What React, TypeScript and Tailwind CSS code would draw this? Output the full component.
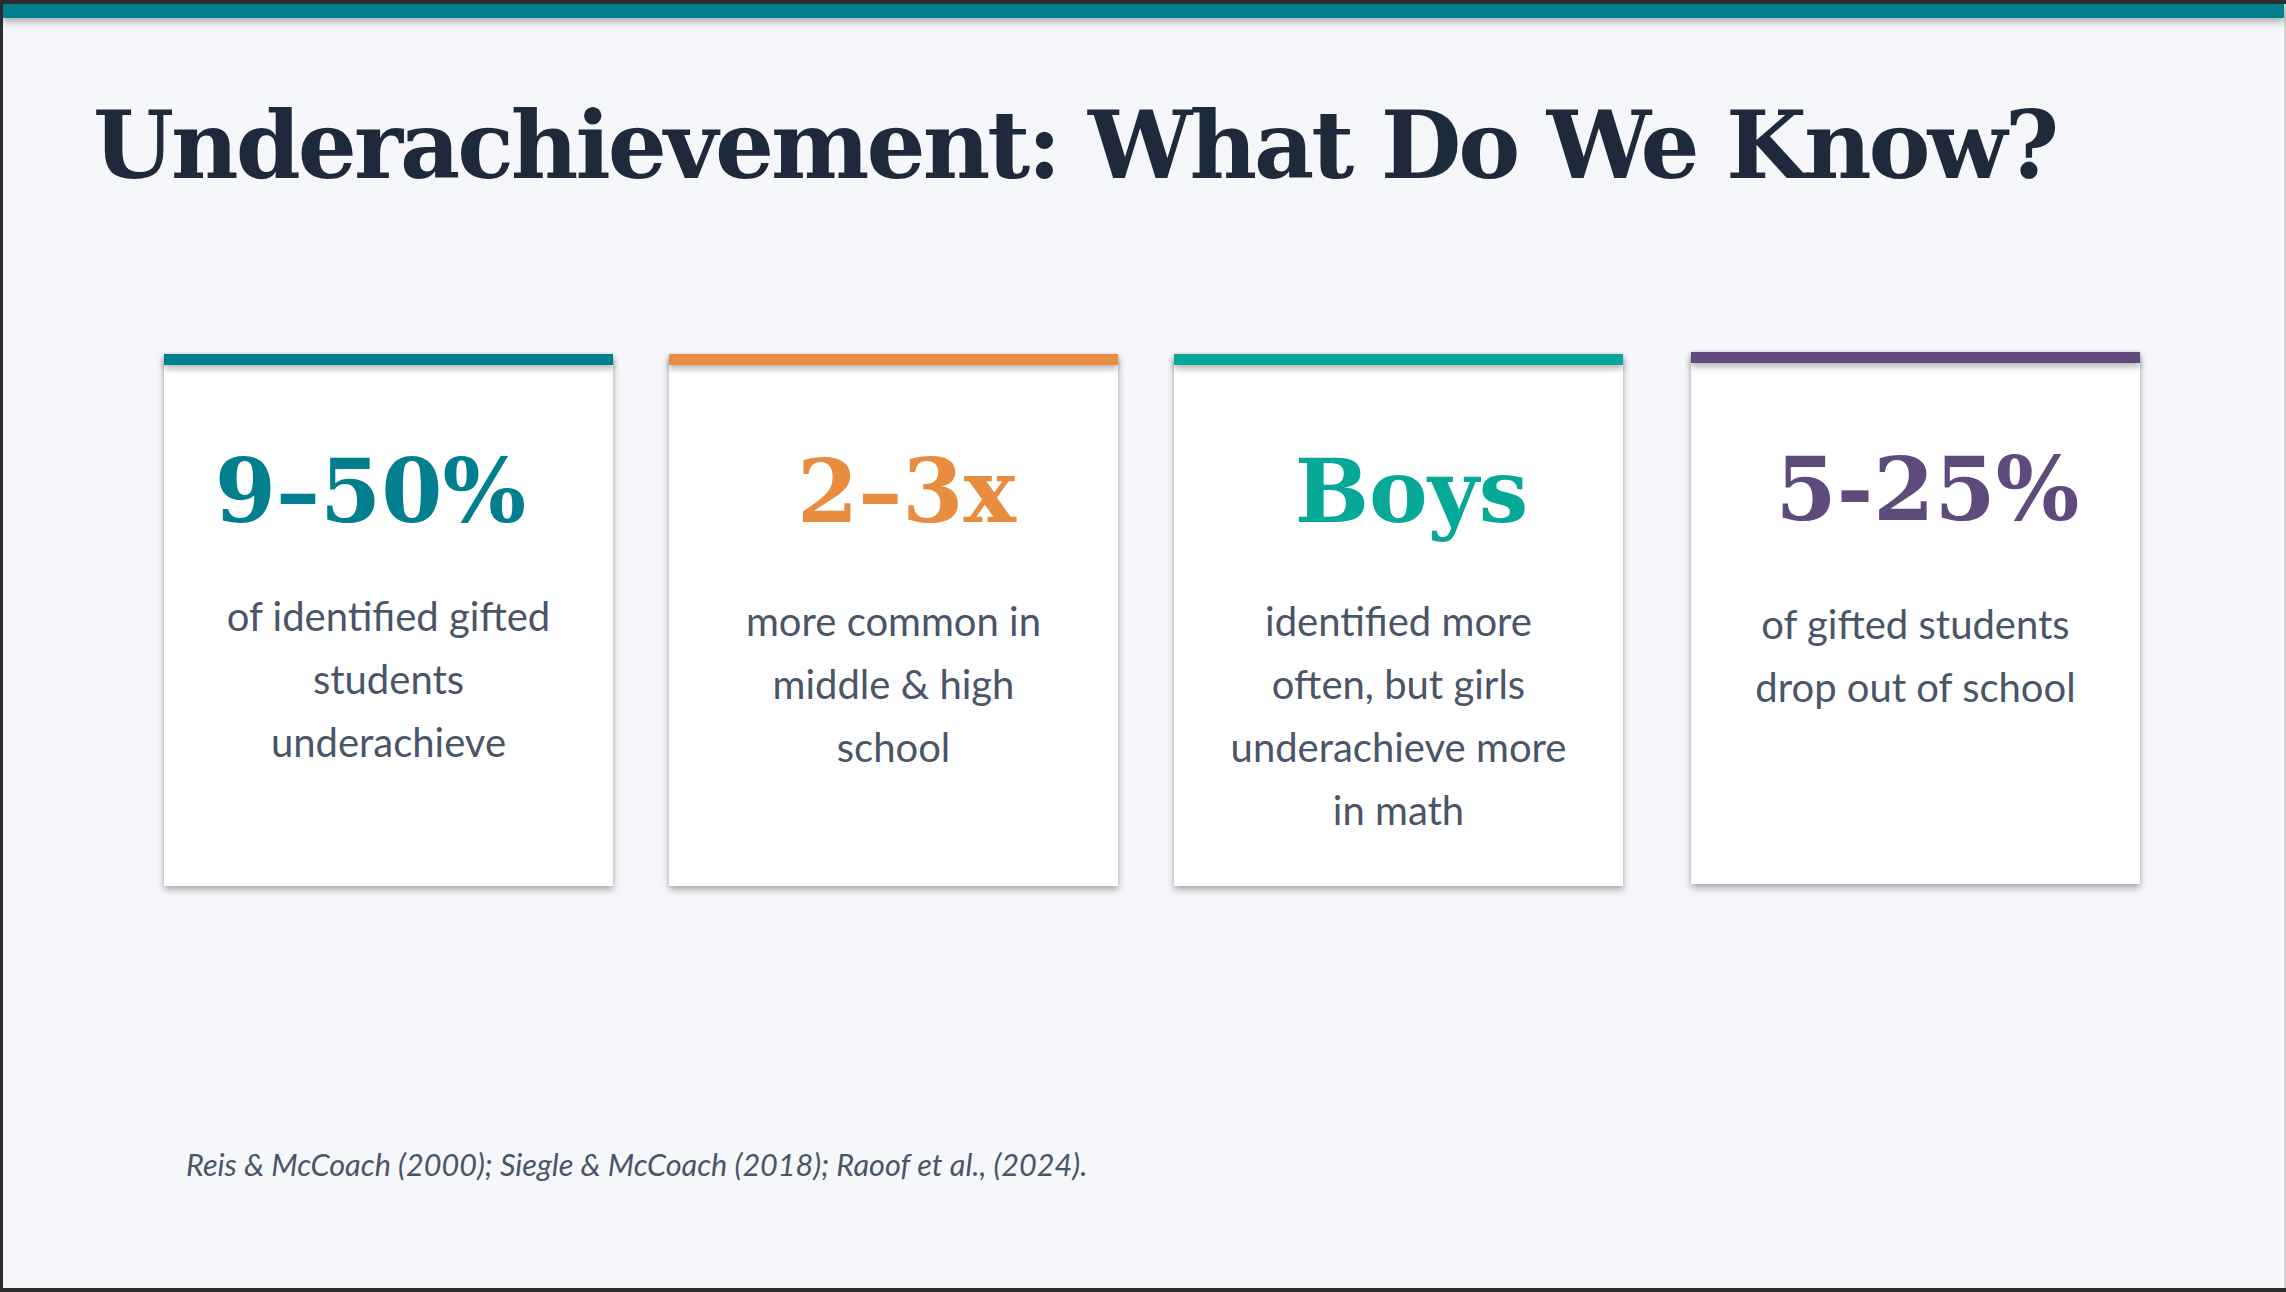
const serif = "font-['DejaVu_Serif',Georgia,serif]";
const sans = "font-['Lato','Open_Sans',sans-serif]";

const stats = [
  {
    value: '9–50%',
    color: 'text-[#027f8e]',
    bar: 'bg-[#027f8e]',
    shift: 'pr-[36px]',
    gap: 'mt-[50px]',
    lines: ['of identified gifted', 'students', 'underachieve'],
  },
  {
    value: '2–3x',
    color: 'text-[#e88c3f]',
    bar: 'bg-[#e88c3f]',
    shift: 'pl-[26px]',
    gap: 'mt-[55px]',
    lines: ['more common in', 'middle & high', 'school'],
  },
  {
    value: 'Boys',
    color: 'text-[#06a898]',
    bar: 'bg-[#06a898]',
    shift: 'pl-[26px]',
    gap: 'mt-[55px]',
    lines: ['identified more', 'often, but girls', 'underachieve more', 'in math'],
  },
  {
    value: '5-25%',
    color: 'text-[#5f4a7d]',
    bar: 'bg-[#5f4a7d]',
    shift: 'pl-[24px]',
    gap: 'mt-[60px]',
    lines: ['of gifted students', 'drop out of school'],
  },
];

function StatCard({ s, last }: { s: (typeof stats)[number]; last?: boolean }) {
  return (
    <div
      className={`w-[449px] h-[532px] bg-white flex flex-col shadow-[0_4px_7px_rgba(0,0,0,0.3),0_0_3px_rgba(0,0,0,0.1)] ${
        last ? 'ml-[12px] -mt-[2px]' : ''
      }`}
    >
      <div className={`h-[11px] ${s.bar} relative z-10 shadow-[0_4px_6px_rgba(0,0,0,0.28)]`} />
      <div
        className={`mt-[82px] text-center text-[88px] leading-none font-bold ${serif} ${s.color} ${s.shift}`}
      >
        {s.value}
      </div>
      <div className={`${s.gap} text-center text-[40px] leading-[63px] text-[#4a5568] ${sans}`}>
        {s.lines.map((l, i) => (
          <div key={i}>{l}</div>
        ))}
      </div>
    </div>
  );
}

export default function App() {
  return (
    <div className="w-[2286px] h-[1292px] bg-[#2e2e2e] pt-[4px] pl-[3px] pb-[4px]">
      <div className="h-full bg-[#f5f7fa] border-r-2 border-[#d6d6d6] flex flex-col">
        {/* top accent bar */}
        <div className="h-[14px] bg-[#027f8e] relative z-10 shadow-[0_4px_7px_rgba(0,0,0,0.3)]" />

        <h1
          className={`mt-[81px] pl-[90px] text-[93px] leading-none font-bold tracking-[-3px] text-[#1e293b] ${serif}`}
        >
          Underachievement: What Do We Know?
        </h1>

        <div className="mt-[162px] pl-[161px] flex items-start gap-[56px]">
          {stats.map((s, i) => (
            <StatCard key={i} s={s} last={i === stats.length - 1} />
          ))}
        </div>

        <p className={`mt-[264px] pl-[183px] text-[30.6px] leading-none italic text-[#4a5568] ${sans}`}>
          Reis &amp; McCoach (2000); Siegle &amp; McCoach (2018); Raoof et al., (2024).
        </p>
      </div>
    </div>
  );
}
